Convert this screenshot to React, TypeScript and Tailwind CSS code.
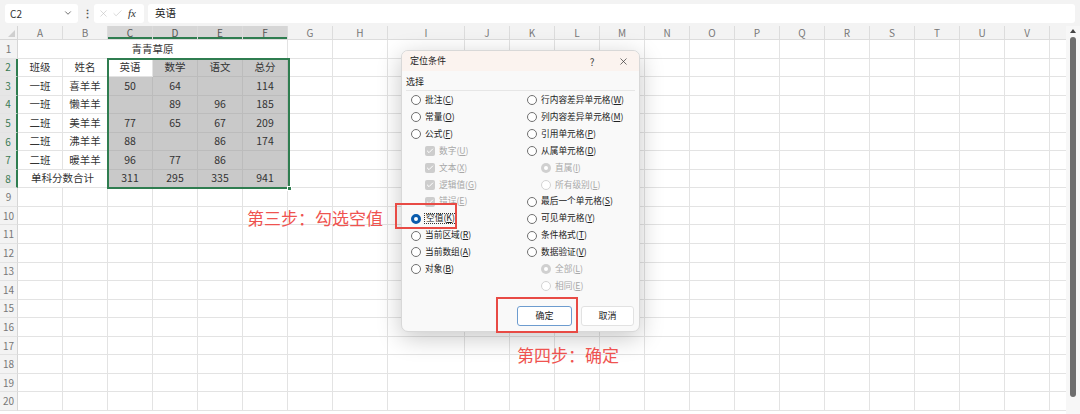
import React from 'react';
import { ChevronDown, X, Check } from 'lucide-react';

const FONT = "font-['Noto_Sans_CJK_SC','Noto_Sans',sans-serif]";

const letters = 'ABCDEFGHIJKLMNOPQRSTUVW'.split('');

type Cell = { t: string; span?: number };

const data: Record<number, Cell[]> = {
  1: [{ t: '青青草原', span: 6 }],
  2: [{ t: '班级' }, { t: '姓名' }, { t: '英语' }, { t: '数学' }, { t: '语文' }, { t: '总分' }],
  3: [{ t: '一班' }, { t: '喜羊羊' }, { t: '50' }, { t: '64' }, { t: '' }, { t: '114' }],
  4: [{ t: '一班' }, { t: '懒羊羊' }, { t: '' }, { t: '89' }, { t: '96' }, { t: '185' }],
  5: [{ t: '二班' }, { t: '美羊羊' }, { t: '77' }, { t: '65' }, { t: '67' }, { t: '209' }],
  6: [{ t: '二班' }, { t: '沸羊羊' }, { t: '88' }, { t: '' }, { t: '86' }, { t: '174' }],
  7: [{ t: '二班' }, { t: '暖羊羊' }, { t: '96' }, { t: '77' }, { t: '86' }, { t: '' }],
  8: [{ t: '单科分数合计', span: 2 }, { t: '311' }, { t: '295' }, { t: '335' }, { t: '941' }],
};

function rowCells(r: number) {
  const cells: { t: string; span: number; col: number }[] = [];
  const given = data[r] || [];
  let col = 0;
  for (const c of given) {
    cells.push({ t: c.t, span: c.span || 1, col });
    col += c.span || 1;
  }
  while (col < letters.length) {
    cells.push({ t: '', span: 1, col });
    col++;
  }
  return cells;
}

function Sheet() {
  const rows = Array.from({ length: 20 }, (_, i) => i + 1);
  return (
    <div className="relative flex-1 overflow-hidden">
      <div className="grid w-max grid-cols-[18px_repeat(7,45px)_55px_77px_repeat(14,45px)] grid-rows-[14px_repeat(20,18.55px)]">
        {/* column header */}
        <div className="relative border-r border-b border-[#d6d6d6] bg-[#f3f3f3]">
          <div className="absolute right-[2px] bottom-[2px] w-0 h-0 border-l-[7px] border-l-transparent border-b-[7px] border-b-[#cfcfcf]" />
        </div>
        {letters.map((l, i) => {
          const hl = i >= 2 && i <= 5;
          return (
            <div
              key={l}
              className={`flex items-center justify-center text-[10px] leading-none border-r border-b border-[#dcdcdc] ${
                hl ? 'bg-[#d6d6d6] text-[#555] shadow-[inset_0_-2px_0_#2f7d50]' : 'bg-[#f3f3f3] text-[#777]'
              }`}
            >
              {l}
            </div>
          );
        })}
        {rows.map((r) => {
          const hl = r >= 2 && r <= 8;
          return (
            <React.Fragment key={r}>
              <div
                className={`flex items-center justify-center text-[10px] leading-none border-b border-[#e3e3e3] ${
                  hl ? 'bg-[#e6e6e6] text-[#3a7a55] border-r-2 border-r-[#2f7d50]' : 'bg-[#f3f3f3] text-[#777] border-r border-r-[#d6d6d6]'
                }`}
              >
                {r}
              </div>
              {rowCells(r).map((c) => {
                const sel = r >= 2 && r <= 8 && c.col >= 2 && c.col <= 5;
                const active = r === 2 && c.col === 2;
                const bg = active ? 'bg-white border-[#e3e3e3]' : sel ? 'bg-[#c9c9c9] border-[#bcbcbc]' : 'bg-white border-[#e3e3e3]';
                const span = c.span === 6 ? 'col-span-6' : c.span === 2 ? 'col-span-2' : '';
                return (
                  <div
                    key={c.col}
                    className={`${span} ${bg} border-r border-b flex items-center justify-center text-[10.5px] leading-none text-[#333]`}
                  >
                    {c.t}
                  </div>
                );
              })}
            </React.Fragment>
          );
        })}
      </div>
      {/* selection outline C2:F8 */}
      <div className="absolute left-[107px] top-[32px] w-[183px] h-[131px] border-2 border-[#2f7d50] pointer-events-none" />
      <div className="absolute left-[287px] top-[160px] w-[5px] h-[5px] bg-[#2f7d50] border border-white" />
    </div>
  );
}

function Radio({ on, disabled }: { on?: boolean; disabled?: boolean }) {
  if (on && !disabled) {
    return <span className="w-[10px] h-[10px] rounded-full border-[3px] border-[#0b5cad] bg-white shrink-0" />;
  }
  if (on && disabled) {
    return (
      <span className="w-[10px] h-[10px] rounded-full bg-[#d0d0d0] flex items-center justify-center shrink-0">
        <span className="w-[4px] h-[4px] rounded-full bg-white" />
      </span>
    );
  }
  return (
    <span
      className={`w-[10px] h-[10px] rounded-full border bg-white shrink-0 ${disabled ? 'border-[#d4d4d4]' : 'border-[#707070]'}`}
    />
  );
}

function Box() {
  return (
    <span className="w-[10px] h-[10px] rounded-[2px] bg-[#cdcdcd] flex items-center justify-center shrink-0">
      <Check className="w-[8px] h-[8px] text-white" strokeWidth={3} />
    </span>
  );
}

type Opt = { name: string; key: string; kind: 'radio' | 'box'; indent?: boolean; disabled?: boolean; on?: boolean; focus?: boolean };

function Option({ o }: { o: Opt }) {
  return (
    <div className={`h-[16.9px] flex items-center gap-[4px] ${o.indent ? 'pl-[14px]' : ''}`}>
      {o.kind === 'box' ? <Box /> : <Radio on={o.on} disabled={o.disabled} />}
      <span
        className={`text-[8.7px] leading-none whitespace-nowrap ${o.disabled ? 'text-[#a8a8a8]' : 'text-[#222]'} ${
          o.focus ? 'outline outline-1 outline-dotted outline-[#333] px-[1px]' : ''
        }`}
      >
        {o.name}(<span className="underline">{o.key}</span>)
      </span>
    </div>
  );
}

const leftOpts: Opt[] = [
  { name: '批注', key: 'C', kind: 'radio' },
  { name: '常量', key: 'O', kind: 'radio' },
  { name: '公式', key: 'F', kind: 'radio' },
  { name: '数字', key: 'U', kind: 'box', indent: true, disabled: true },
  { name: '文本', key: 'X', kind: 'box', indent: true, disabled: true },
  { name: '逻辑值', key: 'G', kind: 'box', indent: true, disabled: true },
  { name: '错误', key: 'E', kind: 'box', indent: true, disabled: true },
  { name: '空值', key: 'K', kind: 'radio', on: true, focus: true },
  { name: '当前区域', key: 'R', kind: 'radio' },
  { name: '当前数组', key: 'A', kind: 'radio' },
  { name: '对象', key: 'B', kind: 'radio' },
];

const rightOpts: Opt[] = [
  { name: '行内容差异单元格', key: 'W', kind: 'radio' },
  { name: '列内容差异单元格', key: 'M', kind: 'radio' },
  { name: '引用单元格', key: 'P', kind: 'radio' },
  { name: '从属单元格', key: 'D', kind: 'radio' },
  { name: '直属', key: 'I', kind: 'radio', indent: true, disabled: true, on: true },
  { name: '所有级别', key: 'L', kind: 'radio', indent: true, disabled: true },
  { name: '最后一个单元格', key: 'S', kind: 'radio' },
  { name: '可见单元格', key: 'Y', kind: 'radio' },
  { name: '条件格式', key: 'T', kind: 'radio' },
  { name: '数据验证', key: 'V', kind: 'radio' },
  { name: '全部', key: 'L', kind: 'radio', indent: true, disabled: true, on: true },
  { name: '相同', key: 'E', kind: 'radio', indent: true, disabled: true },
];

function Dialog() {
  return (
    <div className="absolute left-[401px] top-[50px] w-[239px] h-[282px] rounded-[7px] border border-[#d8d8d8] bg-[#f9f9f9] shadow-[0_6px_24px_rgba(0,0,0,0.22)] overflow-hidden flex flex-col">
      <div className="h-[20px] bg-[#fbf3ef] flex items-center pl-[8px] pr-[10px] text-[9px] text-[#222]">
        <span className="flex-1">定位条件</span>
        <span className="w-[12px] text-center text-[10px] text-[#444] mr-[20px]">?</span>
        <X className="w-[11px] h-[11px] text-[#333]" strokeWidth={1.5} />
      </div>
      <div className="px-[4px] pt-[4px]">
        <div className="text-[9px] leading-[14px] text-[#222] pb-[1px]">选择</div>
        <div className="h-px bg-[#e6e6e6]" />
      </div>
      <div className="flex pl-[9px] pt-[1px]">
        <div className="w-[116px] flex flex-col">
          {leftOpts.map((o) => (
            <Option key={o.name} o={o} />
          ))}
        </div>
        <div className="flex flex-col">
          {rightOpts.map((o) => (
            <Option key={o.name} o={o} />
          ))}
        </div>
      </div>
      <div className="mt-auto flex justify-end gap-[9px] pr-[5px] pb-[5px]">
        <div className="w-[55px] h-[20px] rounded-[3px] border border-[#6d9ccf] bg-white flex items-center justify-center text-[9px] text-[#222]">
          确定
        </div>
        <div className="w-[53px] h-[20px] rounded-[3px] border border-[#e2e2e2] bg-white flex items-center justify-center text-[9px] text-[#222]">
          取消
        </div>
      </div>
    </div>
  );
}

export default function App() {
  return (
    <div className={`w-[1080px] h-[414px] overflow-hidden bg-white flex flex-col relative ${FONT}`}>
      {/* formula bar */}
      <div className="h-[26px] bg-[#f3f3f3] flex items-center gap-[4px] pl-[5px] pr-[5px]">
        <div className="w-[73px] h-[19px] rounded-[3px] bg-white flex items-center px-[5px] text-[10px] text-[#333]">
          <span className="flex-1">C2</span>
          <ChevronDown className="w-[10px] h-[10px] text-[#555]" />
        </div>
        <span className="w-[8px] text-center text-[11px] text-[#555] font-bold">⋮</span>
        <div className="w-[50px] h-[19px] rounded-[3px] bg-white flex items-center gap-[3px] px-[4px]">
          <X className="w-[11px] h-[11px] text-[#bbb]" strokeWidth={1.2} />
          <Check className="w-[11px] h-[11px] text-[#bbb]" strokeWidth={1.2} />
          <span className="text-[11px] italic font-['Liberation_Serif',serif] text-[#333] ml-[2px]">fx</span>
        </div>
        <div className="flex-1 h-[19px] rounded-[3px] bg-white flex items-center px-[7px] text-[10.5px] text-[#222]">
          英语
        </div>
      </div>
      <div className="flex-1 flex overflow-hidden">
        <Sheet />
        {/* vertical scrollbar */}
        <div className="w-[14px] bg-[#f7f7f7] flex flex-col items-center pt-[3px]">
          <div className="w-0 h-0 border-l-[3px] border-l-transparent border-r-[3px] border-r-transparent border-b-[4px] border-b-[#444]" />
          <div className="w-[6px] h-[360px] rounded-full bg-[#6e6e6e] mt-[4px]" />
        </div>
      </div>

      <Dialog />

      {/* annotations */}
      <div className="absolute left-[395px] top-[203px] w-[62px] h-[26px] border-2 border-[#e84b45]" />
      <div className="absolute left-[496px] top-[297px] w-[82px] h-[36px] border-2 border-[#e84b45]" />
      <div className="absolute left-[247px] top-[206px] text-[17px] leading-[24px] text-[#ef5350] whitespace-nowrap">
        第三步：勾选空值
      </div>
      <div className="absolute left-[517px] top-[343px] text-[17px] leading-[24px] text-[#ef5350] whitespace-nowrap">
        第四步：确定
      </div>
    </div>
  );
}
